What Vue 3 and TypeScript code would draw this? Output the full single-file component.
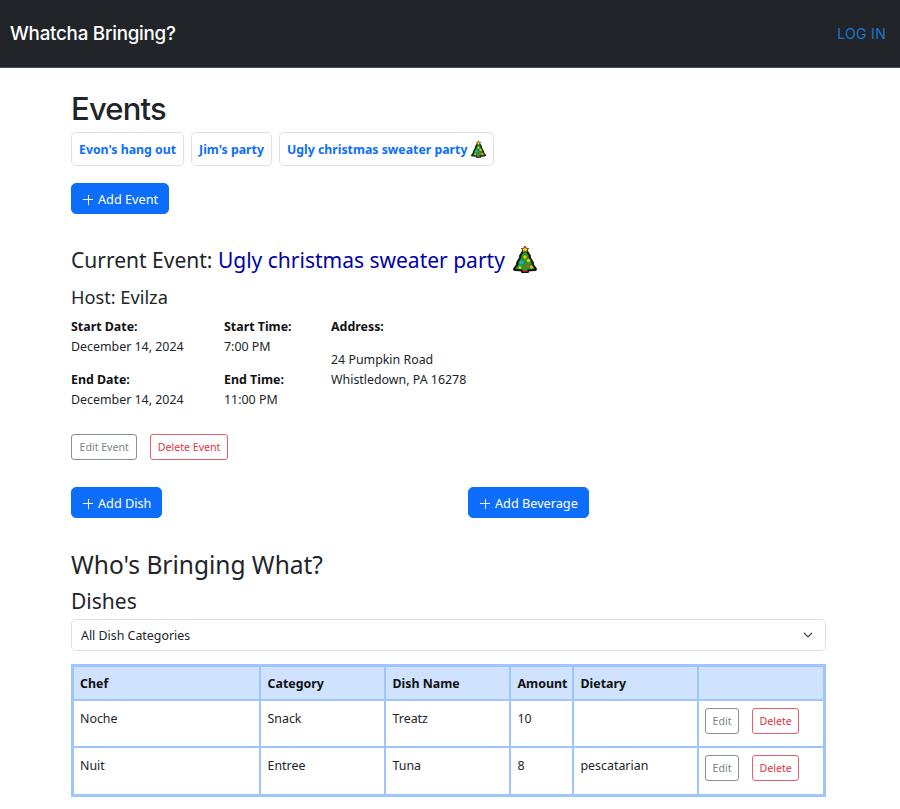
<template>
  <nav class="navbar">
    <span class="brand">Whatcha Bringing?</span>
    <a class="login">LOG IN</a>
  </nav>

  <main class="page">
    <h1 class="title">Events</h1>
    <div class="pills">
      <button v-for="ev in events" :key="ev.name" class="pill">
        {{ ev.name }}
        <svg v-if="ev.tree" class="tree" viewBox="0 0 24 28"><use href="#tree-icon" /></svg>
      </button>
    </div>
    <button class="btn-add add-event"><span class="plus"></span>Add Event</button>

    <h2 class="current">
      Current Event: <span class="current-name">Ugly christmas sweater party</span>
      <svg class="tree big" viewBox="0 0 24 28">
        <defs>
          <g id="tree-icon">
            <path d="M12 3 L17 11 L16.5 12 L20 18 L19.5 19 L23 24 Q23 25 21 25 L15 25.5 L15 27 L9 27 L9 25.5 L3 25 Q1 25 1 24 L4.5 19 L4 18 L7.5 12 L7 11 Z" fill="#1f9a2c" stroke="#111" stroke-width="2" stroke-linejoin="round" />
            <path d="M12 1 l1.3 2.2 2.4.4-1.8 1.7.5 2.5-2.4-1.2-2.4 1.2.5-2.5-1.8-1.7 2.4-.4z" fill="#f5d000" stroke="#111" stroke-width=".7" />
            <circle cx="12" cy="12" r="1.7" fill="#f5c400" />
            <circle cx="8.5" cy="17.5" r="1.9" fill="#29a8e0" />
            <circle cx="15.5" cy="15.5" r="1.8" fill="#f5c400" />
            <circle cx="14.5" cy="21" r="1.8" fill="#e6402a" />
            <circle cx="7" cy="22.5" r="1.5" fill="#f5c400" />
            <circle cx="18.5" cy="22" r="1.5" fill="#f5c400" />
            <rect x="9.5" y="25" width="5" height="1.6" fill="#c0392b" />
          </g>
        </defs>
        <use href="#tree-icon" />
      </svg>
    </h2>
    <h3 class="host">Host: Evilza</h3>

    <div class="details">
      <div class="col col-date">
        <strong>Start Date:</strong>
        <p>December 14, 2024</p>
        <strong class="second">End Date:</strong>
        <p>December 14, 2024</p>
      </div>
      <div class="col col-time">
        <strong>Start Time:</strong>
        <p>7:00 PM</p>
        <strong class="second">End Time:</strong>
        <p>11:00 PM</p>
      </div>
      <div class="col">
        <strong>Address:</strong>
        <p class="street">24 Pumpkin Road</p>
        <p>Whistledown, PA 16278</p>
      </div>
    </div>

    <div class="event-actions">
      <button class="btn-sm grey">Edit Event</button>
      <button class="btn-sm red">Delete Event</button>
    </div>

    <div class="add-row">
      <div class="add-cell"><button class="btn-add"><span class="plus"></span>Add Dish</button></div>
      <div class="add-cell"><button class="btn-add"><span class="plus"></span>Add Beverage</button></div>
    </div>

    <h2 class="who">Who's Bringing What?</h2>
    <h3 class="dishes">Dishes</h3>

    <div class="select">
      <span>All Dish Categories</span>
      <svg width="10" height="10" viewBox="0 0 16 16"><path d="M2 5l6 6 6-6" fill="none" stroke="#343a40" stroke-width="2" stroke-linecap="round" stroke-linejoin="round" /></svg>
    </div>

    <table class="dish-table">
      <colgroup>
        <col style="width: 187px" />
        <col style="width: 125px" />
        <col style="width: 125px" />
        <col style="width: 63px" />
        <col style="width: 125px" />
        <col />
      </colgroup>
      <thead>
        <tr>
          <th>Chef</th>
          <th>Category</th>
          <th>Dish Name</th>
          <th>Amount</th>
          <th>Dietary</th>
          <th></th>
        </tr>
      </thead>
      <tbody>
        <tr v-for="dish in dishes" :key="dish.chef">
          <td>{{ dish.chef }}</td>
          <td>{{ dish.category }}</td>
          <td>{{ dish.name }}</td>
          <td>{{ dish.amount }}</td>
          <td>{{ dish.dietary }}</td>
          <td class="actions">
            <button class="btn-sm grey">Edit</button>
            <button class="btn-sm red">Delete</button>
          </td>
        </tr>
      </tbody>
    </table>
  </main>
</template>

<script setup lang="ts">
const events = [
  { name: "Evon's hang out", tree: false },
  { name: "Jim's party", tree: false },
  { name: 'Ugly christmas sweater party', tree: true },
];

const dishes = [
  { chef: 'Noche', category: 'Snack', name: 'Treatz', amount: 10, dietary: '' },
  { chef: 'Nuit', category: 'Entree', name: 'Tuna', amount: 8, dietary: 'pescatarian' },
];
</script>

<style>
html,
body {
  margin: 0;
  background: #fff;
}
</style>

<style scoped>
.navbar {
  height: 68px;
  background: #212529;
  border-bottom: 1px solid #495057;
  display: flex;
  align-items: center;
  justify-content: space-between;
  padding: 0 14px 0 10px;
  box-sizing: border-box;
}

.brand {
  font: 500 18.8px Inter, sans-serif;
  color: #fff;
  letter-spacing: -0.25px;
}

.login {
  font: 400 14px Inter, sans-serif;
  color: #1a76d2;
  letter-spacing: 0.3px;
}

.page {
  padding: 0 74px 0 71px;
  font-family: "Noto Sans", sans-serif;
  font-size: 12.4px;
  color: #212529;
}

.title {
  font: 500 31px/38px Inter, sans-serif;
  letter-spacing: -0.8px;
  margin: 0;
  padding-top: 22px;
  color: #212529;
}

.pills {
  display: flex;
  gap: 7px;
  margin-top: 4px;
}

.pill {
  height: 34px;
  padding: 0 7px;
  background: #fff;
  border: 1px solid #dee2e6;
  border-radius: 5px;
  font: 700 12.3px "Noto Sans", sans-serif;
  color: #0d6efd;
  display: flex;
  align-items: center;
  gap: 4px;
}

.tree {
  width: 15px;
  height: 18px;
}

.tree.big {
  width: 24px;
  height: 28px;
  vertical-align: -5px;
  margin-left: 3px;
  padding-left: 5px;
}

.btn-add {
  height: 31px;
  padding: 0 10px 0 11px;
  background: #0d6efd;
  border: 1px solid #0d6efd;
  border-radius: 5px;
  font: 400 12.7px "Noto Sans", sans-serif;
  color: #fff;
  display: inline-flex;
  align-items: center;
  gap: 5px;
}

.add-event {
  margin-top: 17px;
  display: flex;
}

.plus {
  width: 10px;
  height: 10px;
  margin-top: 2px;
  background:
    linear-gradient(#fff, #fff) center / 100% 1px no-repeat,
    linear-gradient(#fff, #fff) center / 1px 100% no-repeat;
}

.current {
  font: 400 21px/30px "Noto Sans", sans-serif;
  margin: 31px 0 0;
  color: #212529;
}

.current-name {
  color: #0000a8;
}

.host {
  font: 400 18.2px/24px "Noto Sans", sans-serif;
  margin: 10px 0 0;
}

.details {
  display: flex;
  margin-top: 8px;
}

.col {
  display: flex;
  flex-direction: column;
  line-height: 20px;
}

.col strong {
  font-weight: 700;
  color: #111;
}

.col p {
  margin: 0;
}

.col-date {
  width: 153px;
}

.col-time {
  width: 107px;
}

.second {
  margin-top: 13px;
}

.street {
  margin-top: 13px !important;
}

.event-actions {
  display: flex;
  gap: 13px;
  margin-top: 24px;
}

.btn-sm {
  height: 26px;
  padding: 0 7px;
  background: #fff;
  border-radius: 3px;
  font: 400 10.6px "Noto Sans", sans-serif;
  white-space: nowrap;
}

.event-actions .grey {
  padding: 0 7.5px;
}

.event-actions .red {
  padding: 0 6.5px;
}

.grey {
  border: 1px solid #8a9096;
  color: #7b8288;
}

.red {
  border: 1px solid #e4606d;
  color: #dc3545;
}

.add-row {
  display: flex;
  margin-top: 27px;
}

.add-cell {
  flex: none;
  width: 397px;
}

.who {
  font: 400 24.5px/32px "Noto Sans", sans-serif;
  margin: 31px 0 0;
}

.dishes {
  font: 400 21px/28px "Noto Sans", sans-serif;
  margin: 6px 0 0;
}

.select {
  height: 32px;
  margin-top: 4px;
  padding: 0 12px 0 9px;
  border: 1px solid #dee2e6;
  border-radius: 5px;
  box-sizing: border-box;
  display: flex;
  align-items: center;
  justify-content: space-between;
}

.dish-table {
  width: 100%;
  margin-top: 13px;
  border-collapse: collapse;
  table-layout: fixed;
  border: 3px solid #9ec5fe;
}

.dish-table th,
.dish-table td {
  border: 2px solid #9ec5fe;
  padding: 8px 7px;
  text-align: left;
  vertical-align: top;
}

.dish-table th:first-child,
.dish-table td:first-child {
  padding-left: 6px;
}

.dish-table th {
  background: #cfe2ff;
  font-weight: 700;
  color: #111;
  padding-bottom: 7px;
  height: 15px;
}

.dish-table td {
  padding-top: 9px;
  height: 28px;
}

.dish-table tbody tr:last-child td {
  height: 29px;
}

.dish-table td.actions {
  padding: 7px 6px 0;
  white-space: nowrap;
}

.actions .btn-sm {
  margin-right: 13px;
}

.actions .red {
  padding: 0 6px;
}
</style>
